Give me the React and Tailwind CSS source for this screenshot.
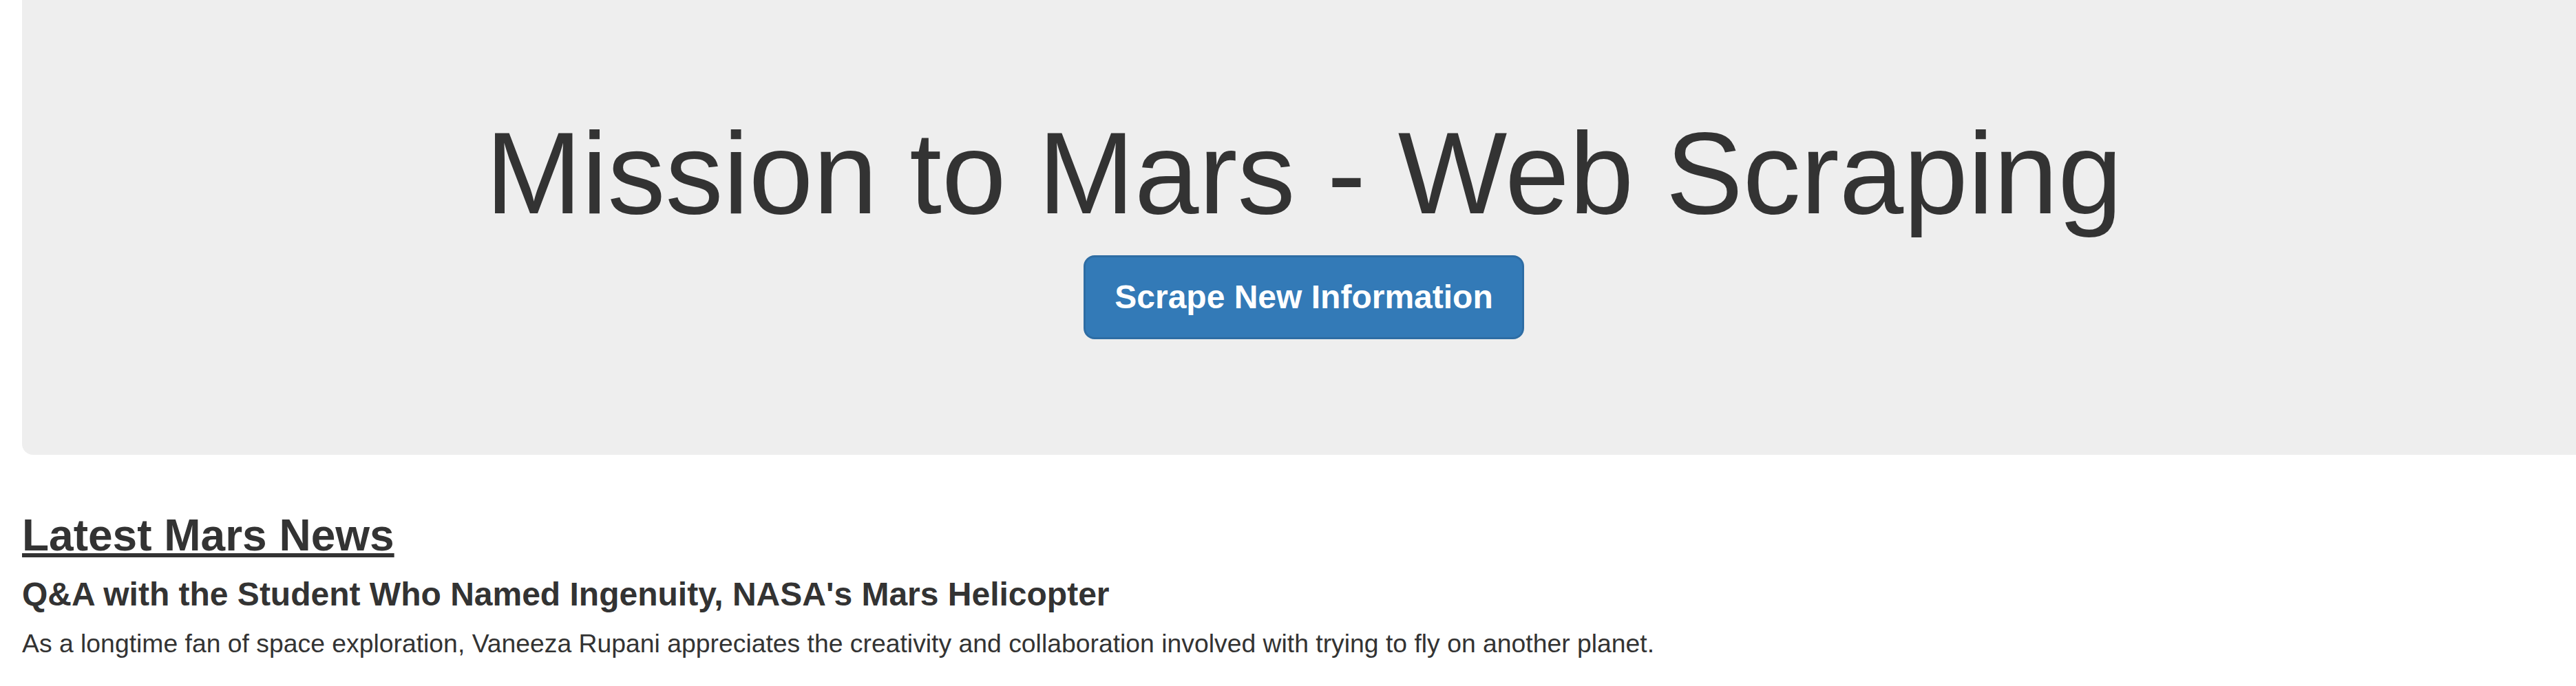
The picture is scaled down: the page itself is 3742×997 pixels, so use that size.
import React from "react";

const news = {
    title: "Q&A with the Student Who Named Ingenuity, NASA's Mars Helicopter",
    paragraph: "As a longtime fan of space exploration, Vaneeza Rupani appreciates the creativity and collaboration involved with trying to fly on another planet.",
};

function Jumbotron() {
    return (
        <div className="ml-[32px] bg-[#eeeeee] rounded-bl-[16px] pt-[160px] pb-[168px] pl-[14px]">
            <div className="flex flex-col items-center">
                <h1 className="text-[168px] leading-[184px] font-normal text-[#333333] whitespace-nowrap">
                    Mission to Mars - Web Scraping
                </h1>
                <button
                    className="mt-[27px] bg-[#337ab7] border-[3px] border-[#2e6da4] rounded-[16px] px-[42px] py-[26px] text-[48px] leading-[64px] font-bold text-white whitespace-nowrap"
                    type="button">
                    Scrape New Information
                </button>
            </div>
        </div>
    );
}

function LatestNews({ item }) {
    return (
        <div className="px-[32px] mt-[82px] text-[#333333]">
            <h3 className="text-[64px] leading-[70px] font-bold underline whitespace-nowrap">Latest Mars News</h3>
            <h4 className="mt-[25px] text-[48px] leading-[52px] font-bold whitespace-nowrap">{item.title}</h4>
            <p className="mt-[19px] text-[37.33px] leading-[53px] whitespace-nowrap">{item.paragraph}</p>
        </div>
    );
}

export default function App() {
    return (
        <div className="min-h-screen bg-white font-['Liberation_Sans',Arial,sans-serif] overflow-hidden">
            <Jumbotron />
            <LatestNews item={news} />
        </div>
    );
}
